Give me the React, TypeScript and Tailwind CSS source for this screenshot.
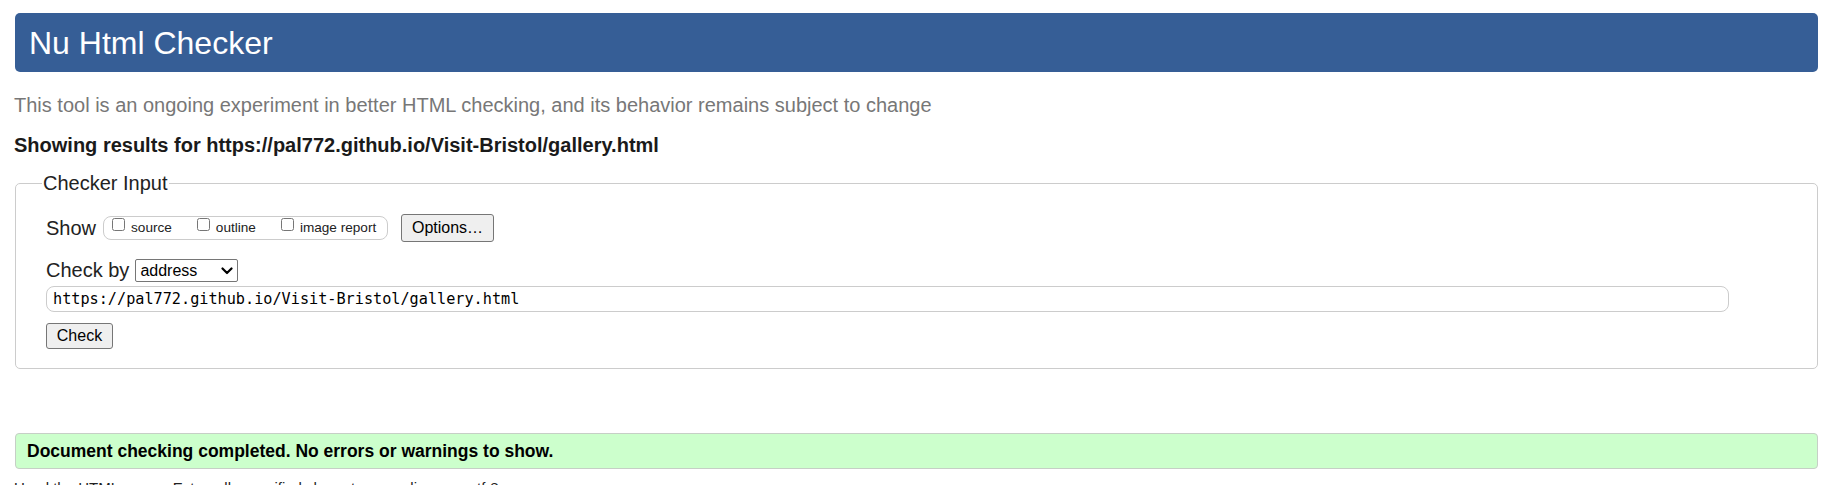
import React from "react";

const sans = { fontFamily: '"Liberation Sans", Arial, sans-serif' };

function Chevron() {
  return (
    <svg width="12" height="8" viewBox="0 0 12 8" className="ml-auto">
      <path d="M1.5 1.5 L6 6 L10.5 1.5" fill="none" stroke="#000" strokeWidth="2.2" strokeLinecap="round" strokeLinejoin="round" />
    </svg>
  );
}

function Check({ label }: { label: string }) {
  return (
    <label className="flex items-center">
      <input type="checkbox" className="w-[13px] h-[13px] m-0 self-start mt-[1px]" />
      <span className="ml-[6px] text-[13.6px] text-[#222]">{label}</span>
    </label>
  );
}

export default function App() {
  return (
    <div className="bg-white min-h-[485px] pl-[15px] pr-[22px] pt-[13px] text-[#222]" style={sans}>
      <div className="h-[59px] rounded-[5px] bg-[#365e96] flex items-center pl-[14px]">
        <h1 className="text-[32px] leading-normal text-white font-normal">Nu Html Checker</h1>
      </div>
      <p className="mt-[22px] -ml-[1px] text-[20px] leading-[23px] text-[#777]">
        This tool is an ongoing experiment in better HTML checking, and its behavior remains subject to change
      </p>
      <p className="mt-[17px] -ml-[1px] text-[20px] leading-[23px] font-bold text-[#1a1a1a]">
        Showing results for https://pal772.github.io/Visit-Bristol/gallery.html
      </p>
      <fieldset className="mt-[15px] border border-[#ccc] rounded-[5px] pl-[26px] pr-[30px] pb-[19px]">
        <legend className="px-[1px] text-[20px] leading-[23px] text-[#222]">Checker Input</legend>
        <div className="pl-[4px]">
          <div className="mt-[19px] flex items-center h-[28px]">
            <span className="text-[20px] leading-[23px]">Show</span>
            <div className="ml-[7px] h-[24px] w-[285px] border border-[#ccc] rounded-[8px] flex items-stretch pl-[8px] gap-[25px]">
              <Check label="source" />
              <Check label="outline" />
              <Check label="image report" />
            </div>
            <button className="ml-[13px] w-[93px] h-[28px] bg-[#efefef] border border-[#767676] rounded-[3px] text-[16px] text-black flex items-center justify-center">
              Options…
            </button>
          </div>
          <div className="mt-[17px] flex items-center h-[23px]">
            <span className="text-[20px] leading-[23px]">Check by</span>
            <div className="ml-[6px] w-[103px] h-[23px] border border-[#767676] rounded-[2px] bg-white flex items-center pl-[4px] pr-[4px] text-[16px] text-black">
              <span>address</span>
              <Chevron />
            </div>
          </div>
          <div
            className="mt-[4px] w-[1683px] h-[26px] border border-[#ccc] rounded-[8px] flex items-center pl-[6px] text-[15.2px] text-black"
            style={{ fontFamily: '"DejaVu Sans Mono", monospace' }}
          >
            https://pal772.github.io/Visit-Bristol/gallery.html
          </div>
          <button className="mt-[11px] w-[67px] h-[26px] bg-[#efefef] border border-[#767676] rounded-[3px] text-[16px] text-black flex items-center justify-center">
            Check
          </button>
        </div>
      </fieldset>
      <div className="mt-[64px] h-[36px] bg-[#ccffcc] border border-[#c6cfc6] rounded-[4px] flex items-center pl-[11px]">
        <span className="text-[17.5px] font-bold text-black">Document checking completed. No errors or warnings to show.</span>
      </div>
      <p className="mt-[10px] -ml-[1px] text-[15px] leading-[17px] text-[#222]">
        Used the HTML parser. Externally specified character encoding was utf-8.
      </p>
    </div>
  );
}
